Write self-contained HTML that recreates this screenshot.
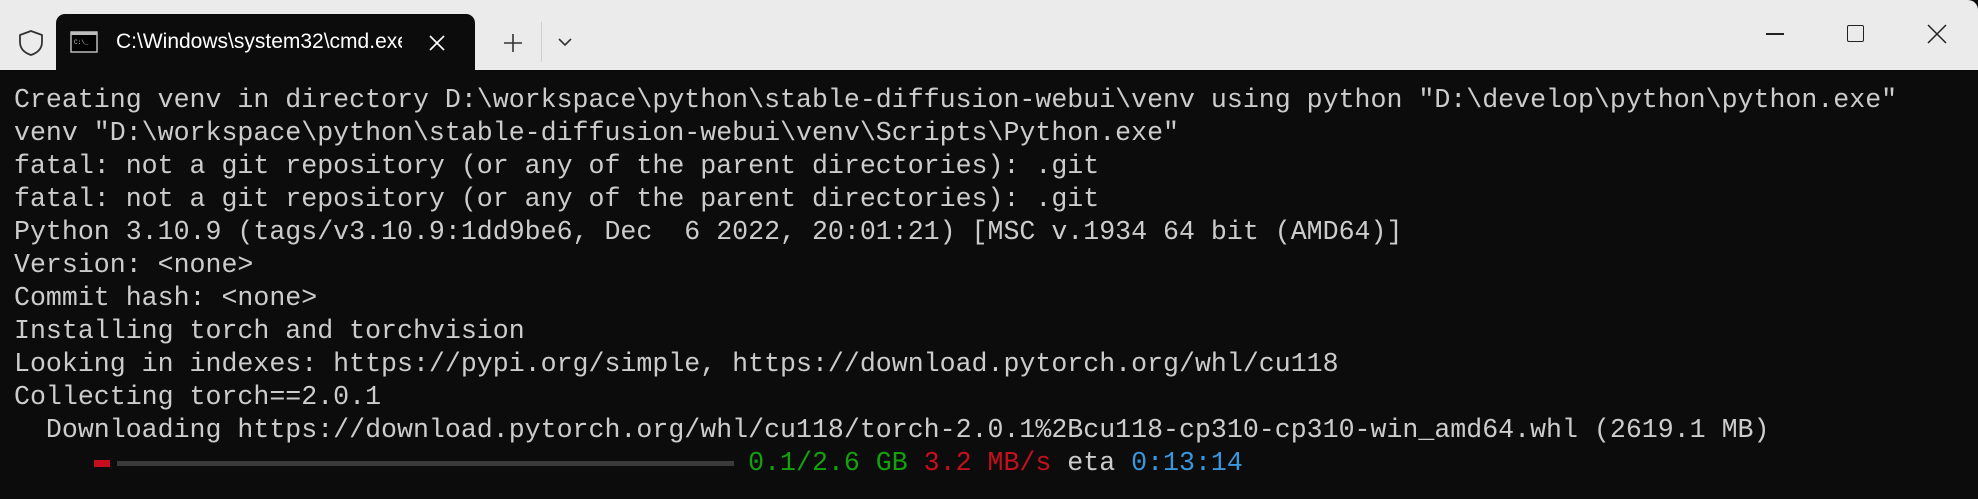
<!DOCTYPE html>
<html><head><meta charset="utf-8"><style>
html,body{margin:0;padding:0;width:1978px;height:499px;overflow:hidden;background:#0c0c0c}
.top{position:absolute;left:0;top:0;width:1978px;height:70px;background:#ebebeb;border-top-right-radius:10px}
.tab{position:absolute;left:56px;top:14px;width:419px;height:60px;background:#0c0c0c;border-radius:9px 9px 0 0}
.tabtxt{position:absolute;left:116px;top:30px;font:21px "Liberation Sans",sans-serif;color:#fff;white-space:nowrap;width:286px;overflow:hidden}
.term{position:absolute;left:14px;top:84px;font-family:"Liberation Mono",monospace;font-size:26.6px;line-height:33px;color:#cccccc;white-space:pre}
.g{color:#13a10e}.r{color:#c50f1f}.b{color:#3a96dd}
</style></head><body>
<div class="top"></div>
<svg style="position:absolute;left:17px;top:29px" width="28" height="28" viewBox="0 0 28 28"><path d="M14 2 L25 6 V13 C25 20 20 24 14 26 C8 24 3 20 3 13 V6 Z" fill="none" stroke="#333" stroke-width="1.8" stroke-linejoin="round"/></svg>
<div class="tab"></div>
<svg style="position:absolute;left:70px;top:31px" width="28" height="22" viewBox="0 0 28 22"><rect x="1" y="1" width="26" height="20" fill="#000" stroke="#bbb" stroke-width="1.5"/><rect x="1" y="1" width="26" height="3" fill="#bbb"/><text x="4" y="13" font-size="6" fill="#ccc" font-family="Liberation Mono">C:\_</text></svg>
<div class="tabtxt">C:\Windows\system32\cmd.exe</div>
<svg style="position:absolute;left:428px;top:34px" width="18" height="18" viewBox="0 0 18 18"><path d="M2 2 L16 16 M16 2 L2 16" stroke="#fff" stroke-width="1.6"/></svg>
<svg style="position:absolute;left:503px;top:33px" width="20" height="20" viewBox="0 0 20 20"><path d="M10 1 V19 M1 10 H19" stroke="#333" stroke-width="1.6"/></svg>
<div style="position:absolute;left:541px;top:22px;width:1px;height:40px;background:#cfcfcf"></div>
<svg style="position:absolute;left:557px;top:37px" width="16" height="10" viewBox="0 0 16 10"><path d="M2 2 L8 8 L14 2" fill="none" stroke="#333" stroke-width="1.6"/></svg>
<div style="position:absolute;left:1766px;top:33px;width:18px;height:1.5px;background:#222"></div>
<div style="position:absolute;left:1847px;top:25px;width:15px;height:15px;border:1.5px solid #222;border-radius:2px"></div>
<svg style="position:absolute;left:1927px;top:24px" width="20" height="20" viewBox="0 0 20 20"><path d="M1 1 L19 19 M19 1 L1 19" stroke="#222" stroke-width="1.5"/></svg>
<div class="term">Creating venv in directory D:\workspace\python\stable-diffusion-webui\venv using python "D:\develop\python\python.exe"
venv "D:\workspace\python\stable-diffusion-webui\venv\Scripts\Python.exe"
fatal: not a git repository (or any of the parent directories): .git
fatal: not a git repository (or any of the parent directories): .git
Python 3.10.9 (tags/v3.10.9:1dd9be6, Dec  6 2022, 20:01:21) [MSC v.1934 64 bit (AMD64)]
Version: &lt;none&gt;
Commit hash: &lt;none&gt;
Installing torch and torchvision
Looking in indexes: https://pypi.org/simple, https://download.pytorch.org/whl/cu118
Collecting torch==2.0.1
  Downloading https://download.pytorch.org/whl/cu118/torch-2.0.1%2Bcu118-cp310-cp310-win_amd64.whl (2619.1 MB)
                                              <span class="g">0.1/2.6 GB</span> <span class="r">3.2 MB/s</span> eta <span class="b">0:13:14</span></div>
<div style="position:absolute;left:94px;top:460px;width:16px;height:7px;background:#c50f1f"></div>
<div style="position:absolute;left:117px;top:461px;width:617px;height:5px;background:#3a3a3a"></div>
</body></html>
